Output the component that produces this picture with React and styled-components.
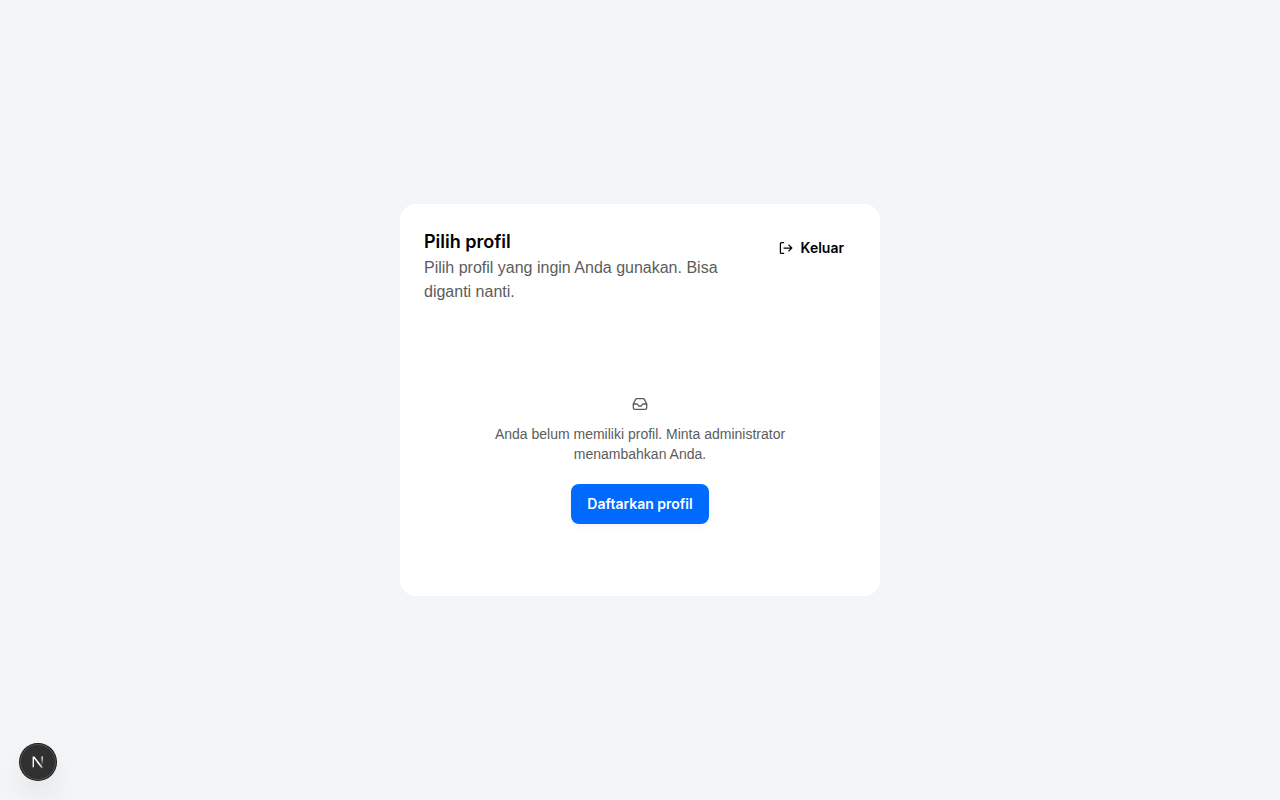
import React from "react";
import styled, { createGlobalStyle } from "styled-components";
import { Inbox } from "lucide-react";

const GlobalStyle = createGlobalStyle`
  *, *::before, *::after { box-sizing: border-box; }
  body {
    margin: 0;
    background: #f3f5f7;
    color: #000;
    font-family: Inter, "Liberation Sans", sans-serif;
    -webkit-font-smoothing: antialiased;
  }
  h1, p { margin: 0; }
`;

const Page = styled.main`
  min-height: 100vh;
  display: flex;
  align-items: center;
  justify-content: center;
  padding: 24px;
`;

const Card = styled.section`
  width: 100%;
  max-width: 480px;
  padding: 24px;
  border-radius: 16px;
  background: #fff;
`;

const Header = styled.header`
  display: flex;
  align-items: flex-start;
  justify-content: space-between;
  gap: 16px;
`;

const Heading = styled.div`
  flex: 1;
`;

const Title = styled.h1`
  font-size: 18px;
  line-height: 28px;
  font-weight: 600;
`;

const Description = styled.p`
  font-family: "Liberation Sans", Arial, sans-serif;
  font-size: 16px;
  line-height: 24px;
  color: #5c5c5c;
`;

const Button = styled.button`
  display: inline-flex;
  align-items: center;
  gap: 8px;
  height: 40px;
  padding: 0 ${({ $primary }) => ($primary ? 16 : 12)}px;
  border: 0;
  border-radius: 8px;
  background: ${({ $primary }) => ($primary ? "#006aff" : "transparent")};
  box-shadow: ${({ $primary }) => ($primary ? "0 2px 6px rgba(0, 0, 0, 0.06)" : "none")};
  color: ${({ $primary }) => ($primary ? "#fff" : "#000")};
  font-family: inherit;
  font-size: 14px;
  line-height: 20px;
  font-weight: 600;
  white-space: nowrap;
  cursor: pointer;
`;

const Empty = styled.div`
  display: flex;
  flex-direction: column;
  align-items: center;
  padding: 92px 48px 48px;
  text-align: center;
  color: #5c5c5c;
`;

const EmptyText = styled.p`
  margin: 12px 0 20px;
  font-family: "Liberation Sans", Arial, sans-serif;
  font-size: 14px;
  line-height: 20px;
`;

const DevButton = styled.button`
  position: fixed;
  left: 20px;
  bottom: 20px;
  width: 36px;
  height: 36px;
  padding: 0;
  display: flex;
  align-items: center;
  justify-content: center;
  border: 0;
  border-radius: 50%;
  background: #303030;
  box-shadow: 0 0 0 1px #171717, inset 0 0 0 1px #505050, 0 16px 32px -8px rgba(0, 0, 0, 0.24);
  cursor: pointer;
`;

function SignOutIcon() {
  return (
    <svg width="14" height="16" viewBox="1 0 14 16" fill="none" stroke="currentColor" strokeWidth="1.25" strokeLinecap="round" strokeLinejoin="round" aria-hidden="true">
      <path d="M5.6 13.4H3.4a1 1 0 0 1-1-1V3.6a1 1 0 0 1 1-1h2.2" />
      <path d="M6 8h7.8M10.9 5.1 13.8 8l-2.9 2.9" />
    </svg>
  );
}

function NextIcon() {
  return (
    <svg width="40" height="40" viewBox="0 0 40 40" fill="none" aria-hidden="true">
      <defs>
        <linearGradient id="diagonal" x1="21" y1="21" x2="26" y2="27" gradientUnits="userSpaceOnUse">
          <stop stopColor="#fff" />
          <stop offset="0.6" stopColor="#fff" stopOpacity="0.8" />
          <stop offset="1" stopColor="#fff" stopOpacity="0" />
        </linearGradient>
        <linearGradient id="stem" x1="24" y1="14" x2="24" y2="24" gradientUnits="userSpaceOnUse">
          <stop stopColor="#fff" />
          <stop offset="1" stopColor="#fff" stopOpacity="0" />
        </linearGradient>
      </defs>
      <path d="M14 14h2l9.8 12.4-1.5 1.1L15.5 16.2v9.6H14z" fill="url(#diagonal)" />
      <path d="M24.6 14v9.5" stroke="url(#stem)" strokeWidth="1.6" />
    </svg>
  );
}

export default function App() {
  return (
    <>
      <GlobalStyle />
      <Page>
        <Card>
          <Header>
            <Heading>
              <Title>Pilih profil</Title>
              <Description>Pilih profil yang ingin Anda gunakan. Bisa diganti nanti.</Description>
            </Heading>
            <Button type="button">
              <SignOutIcon />
              Keluar
            </Button>
          </Header>
          <Empty>
            <Inbox size={16} strokeWidth={2} aria-hidden="true" />
            <EmptyText>Anda belum memiliki profil. Minta administrator menambahkan Anda.</EmptyText>
            <Button type="button" $primary>Daftarkan profil</Button>
          </Empty>
        </Card>
      </Page>
      <DevButton type="button" aria-label="Open Next.js Dev Tools">
        <NextIcon />
      </DevButton>
    </>
  );
}
